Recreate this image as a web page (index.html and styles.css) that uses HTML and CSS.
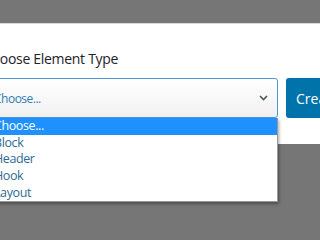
FILE: index.html
```html
<!DOCTYPE html>
<html lang="en">
<head>
  <meta charset="UTF-8" />
  <title>Choose Element Type</title>
  <link rel="stylesheet" href="styles.css">
</head>
<body>
  <div class="backdrop-top"></div>

  <div class="modal">
    <label class="field-label" for="elementType">Choose Element Type</label>
    <div class="field-row">
      <div class="select-wrap">
        <div class="select" id="elementType">
          <span class="select-value">Choose...</span>
          <svg class="chevron" width="9" height="6" viewBox="0 0 9 6">
            <path d="M1 1 L4.5 4.5 L8 1" fill="none" stroke="#50575e" stroke-width="1.6"/>
          </svg>
        </div>
        <ul class="dropdown">
          <li class="selected">Choose...</li>
          <li>Block</li>
          <li>Header</li>
          <li>Hook</li>
          <li>Layout</li>
        </ul>
      </div>
      <button class="btn-create">Create Element</button>
    </div>
  </div>

  <div class="backdrop-bottom"></div>
</body>
</html>
```

FILE: styles.css
```css
* { box-sizing: border-box; margin: 0; padding: 0; }
html, body { width: 320px; height: 240px; overflow: hidden; }
body { font-family: "Open Sans", sans-serif; background: #767676; color: #23282d; }
.backdrop-top { height: 24px; border-bottom: 1px solid #d8d8d8; }
.modal { position: relative; z-index: 2; background: #fff; height: 120px; padding: 25px 0 0 0; }
.backdrop-bottom { height: 95px; }
.field-label { display: block; margin-left: -17px; font-size: 14px; line-height: 20px; letter-spacing: -0.3px; color: #1d2327; white-space: nowrap; }
.field-row { display: flex; gap: 8px; margin-top: 9px; margin-left: -16px; }
.select-wrap { position: relative; width: 294px; flex-shrink: 0; }
.select { height: 40px; border: 1px solid #4f94d4; border-radius: 3px; background: linear-gradient(#fff, #f1f1f1); display: flex; align-items: center; justify-content: space-between; padding: 0 9px 0 9px; font-size: 12px; letter-spacing: -0.5px; color: #2f7db3; }
.select-value { line-height: 18px; padding-top: 2px; }
.chevron { display: block; }
.dropdown { position: absolute; z-index: 5; top: 40px; left: 0; width: 294px; list-style: none; background: #fff; border: 1px solid #9a9a9a; border-top: none; box-shadow: 1px 2px 3px rgba(0,0,0,0.35); font-size: 12.5px; letter-spacing: -0.4px; color: #2f6a94; }
.dropdown li { height: 16.7px; line-height: 16px; padding-left: 9px; white-space: nowrap; }
.dropdown li.selected { background: #1e90ff; color: #fff; }
.btn-create { height: 40px; padding: 0 12px 0 10px; border: none; border-radius: 3px; background: #0073aa; color: #fff; font-family: "Open Sans", sans-serif; font-size: 14px; white-space: nowrap; flex-shrink: 0; }
```
